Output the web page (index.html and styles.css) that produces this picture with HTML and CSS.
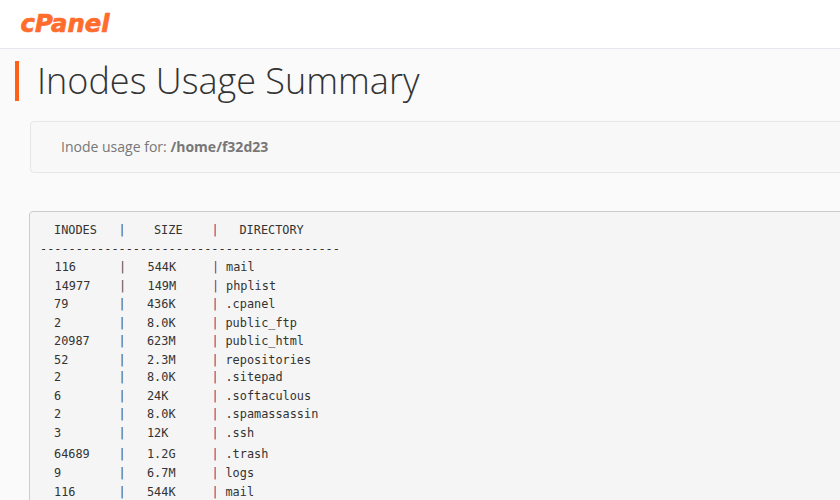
FILE: index.html
```
<!DOCTYPE html>
<html lang="en">
<head>
<meta charset="utf-8">
<title>Inodes Usage Summary</title>
<link rel="stylesheet" href="styles.css">
</head>
<body>
<header class="topbar">
<svg class="logo" width="92" height="24" viewBox="0 0 92 24" role="img" aria-label="cPanel"><text class="wordmark" x="0.5" y="21" textLength="89" lengthAdjust="spacingAndGlyphs">cPanel</text></svg>
</header>
<main>
<h1 class="title">Inodes Usage Summary</h1>
<p class="info">Inode usage for: <strong>/home/f32d23</strong></p>
<section class="report">
<div class="row head"><span>INODES</span><i>|</i><span>SIZE</span><i class="second">|</i><span>DIRECTORY</span></div>
<div class="rule">------------------------------------------</div>
<div class="row shift"><span>116</span><i>|</i><span>544K</span><i class="second">|</i><span>mail</span></div>
<div class="row shift"><span>14977</span><i>|</i><span>149M</span><i class="second">|</i><span>phplist</span></div>
<div class="row"><span>79</span><i>|</i><span>436K</span><i class="second">|</i><span>.cpanel</span></div>
<div class="row"><span>2</span><i>|</i><span>8.0K</span><i class="second">|</i><span>public_ftp</span></div>
<div class="row"><span>20987</span><i>|</i><span>623M</span><i class="second">|</i><span>public_html</span></div>
<div class="row"><span>52</span><i>|</i><span>2.3M</span><i class="second">|</i><span>repositories</span></div>
<div class="row"><span>2</span><i>|</i><span>8.0K</span><i class="second">|</i><span>.sitepad</span></div>
<div class="row"><span>6</span><i>|</i><span>24K</span><i class="second">|</i><span>.softaculous</span></div>
<div class="row"><span>2</span><i>|</i><span>8.0K</span><i class="second">|</i><span>.spamassassin</span></div>
<div class="row"><span>3</span><i>|</i><span>12K</span><i class="second">|</i><span>.ssh</span></div>
<div class="row"><span>64689</span><i>|</i><span>1.2G</span><i class="second">|</i><span>.trash</span></div>
<div class="row"><span>9</span><i>|</i><span>6.7M</span><i class="second">|</i><span>logs</span></div>
<div class="row"><span>116</span><i>|</i><span>544K</span><i class="second">|</i><span>mail</span></div>
</section>
</main>
</body>
</html>
```
FILE: styles.css
```
* { box-sizing: border-box; }
html, body { height: 100%; }
body { margin: 0; background: #fafafa; overflow: hidden; font-family: "Open Sans", sans-serif; }
.topbar { height: 49px; background: #fff; border-bottom: 1px solid #e4e7f0; padding: 11px 20px 0; }
.logo { display: block; overflow: visible; }
.wordmark { font: italic bold 24.5px "DejaVu Sans", sans-serif; fill: #ff6c2c; stroke: #ff6c2c; stroke-width: 0.7px; stroke-linejoin: round; }
.title { margin: 12px 0 0 15px; padding-left: 18px; height: 40px; border-left: 4px solid #ff6018; font-weight: 300; font-size: 36px; line-height: 40px; color: #333; white-space: nowrap; }
.info { margin: 20px 0 0 30px; height: 52px; width: 840px; padding-left: 30px; border: 1px solid #e6e6e6; border-radius: 4px; background: #f8f8f8; font-size: 14.03px; line-height: 50px; color: #777; }
.report { display: grid; grid-template-rows: 19px 18px 19px 18px 19px 18px 19px 17px 19px 18px 19px 21px 19px 19px 19px; margin: 38px 0 0 29px; width: 840px; padding: 9px 0 20px 10px; border: 1px solid #ccc; border-radius: 4px; background: #f5f5f5; font: 11.87px/18px "DejaVu Sans Mono", monospace; color: #333; white-space: pre; }
.row { display: grid; grid-template-columns: 64.4px 28.6px 64.4px 14.1px 1fr; height: 18px; padding-left: 14px; }
.row i { font-style: normal; color: #4c5040; }
.row .second { color: #803080; }
.row.shift { padding-left: 14.6px; }
.head span:nth-of-type(2) { padding-left: 7px; }
.head span:nth-of-type(3) { padding-left: 14px; }
```
